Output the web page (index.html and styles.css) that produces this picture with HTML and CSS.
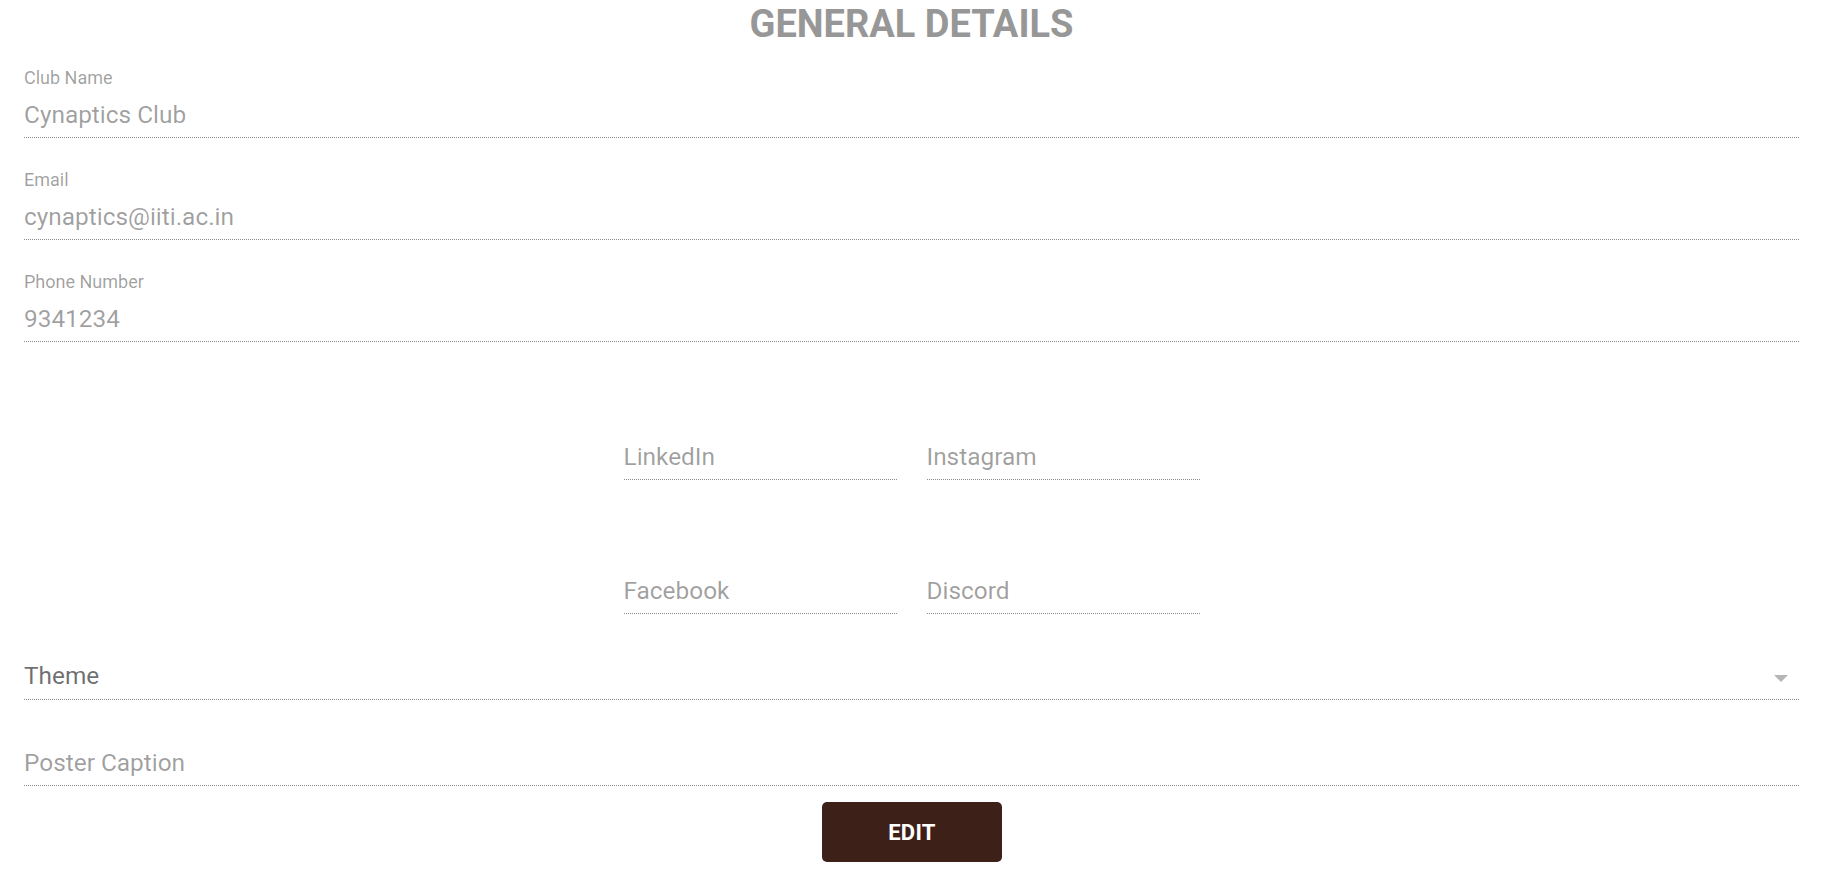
FILE: index.html
```html
<!DOCTYPE html>
<html lang="en">
<head>
<meta charset="utf-8">
<title>General Details</title>
<link rel="stylesheet" href="styles.css">
</head>
<body>
<main class="page">
  <h1 class="title">GENERAL DETAILS</h1>

  <div class="field field-first">
    <label class="label">Club Name</label>
    <div class="input">Cynaptics Club</div>
  </div>
  <div class="field">
    <label class="label">Email</label>
    <div class="input">cynaptics@iiti.ac.in</div>
  </div>
  <div class="field">
    <label class="label">Phone Number</label>
    <div class="input">9341234</div>
  </div>

  <div class="socials socials-first">
    <div class="input">LinkedIn</div>
    <div class="input">Instagram</div>
  </div>
  <div class="socials socials-second">
    <div class="input">Facebook</div>
    <div class="input">Discord</div>
  </div>

  <div class="select">
    <div class="input input-select">Theme</div>
    <span class="arrow"></span>
  </div>

  <div class="caption">
    <div class="input input-caption">Poster Caption</div>
  </div>

  <div class="actions">
    <button class="btn">EDIT</button>
  </div>
</main>
</body>
</html>
```

FILE: styles.css
```css
html, body {
  margin: 0;
  padding: 0;
  background: #ffffff;
}

body {
  font-family: Roboto, "Liberation Sans", Arial, sans-serif;
  color: rgba(0, 0, 0, 0.38);
}

.page {
  padding: 3px 29px 0 24px;
  display: flex;
  flex-direction: column;
}

.title {
  margin: 0;
  font-size: 38px;
  line-height: 42px;
  font-weight: 700;
  text-align: center;
  color: #979797;
}

.field {
  display: flex;
  flex-direction: column;
  margin-top: 31px;
}

.field-first {
  margin-top: 22px;
}

.label {
  font-size: 18px;
  line-height: 21px;
  color: rgba(0, 0, 0, 0.38);
  margin-bottom: 13px;
}

.input {
  font-size: 24.4px;
  line-height: 28px;
  color: rgba(0, 0, 0, 0.38);
  padding-bottom: 8px;
  border-bottom: 1px dotted rgba(0, 0, 0, 0.45);
}

.socials {
  display: grid;
  grid-template-columns: 273px 273px;
  column-gap: 30px;
  justify-content: center;
}

.socials-first {
  margin-top: 101px;
}

.socials-second {
  margin-top: 97px;
}

.select {
  position: relative;
  margin-top: 48px;
}

.input-select {
  color: rgba(0, 0, 0, 0.58);
  padding-bottom: 9px;
}

.arrow {
  position: absolute;
  right: 11px;
  top: 13px;
  width: 0;
  height: 0;
  border-left: 7px solid transparent;
  border-right: 7px solid transparent;
  border-top: 7px solid #b5b5b5;
}

.caption {
  margin-top: 49px;
}

.input-caption {
  padding-bottom: 8px;
}

.actions {
  display: flex;
  justify-content: center;
  margin-top: 16px;
  padding-left: 1px;
}

.btn {
  width: 180px;
  height: 60px;
  border: none;
  border-radius: 5px;
  background: #3d2118;
  color: #ffffff;
  font-family: Roboto, "Liberation Sans", Arial, sans-serif;
  font-size: 22px;
  font-weight: 700;
  letter-spacing: 0.3px;
  cursor: pointer;
}
```
